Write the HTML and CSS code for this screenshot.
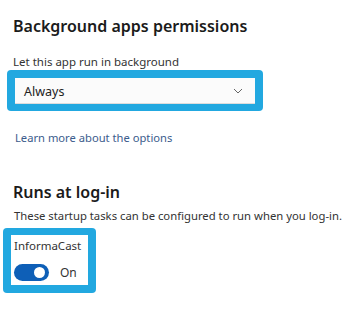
FILE: index.html
```html
<!DOCTYPE html>
<html>
<head>
    <title>App permissions</title>
    <link rel="stylesheet" href="styles.css">
</head>
<body>
    <div class="section">
        <h2>Background apps permissions</h2>
        <p class="label">Let this app run in background</p>
        <div class="highlight select-wrap">
            <div class="select">
                <span>Always</span>
                <svg class="chevron" width="10" height="6" viewBox="0 0 10 6">
                    <path d="M1 1 L5 5 L9 1" fill="none" stroke="#666" stroke-width="1"/>
                </svg>
            </div>
        </div>
        <a class="link" href="#">Learn more about the options</a>
    </div>

    <div class="section login">
        <h2>Runs at log-in</h2>
        <p class="desc">These startup tasks can be configured to run when you log-in.</p>
        <div class="highlight task-wrap">
            <div class="task">
                <div class="task-name">InformaCast</div>
                <div class="toggle-row">
                    <span class="toggle"><span class="knob"></span></span>
                    <span class="state">On</span>
                </div>
            </div>
        </div>
    </div>
</body>
</html>
```

FILE: styles.css
```css
body {
    font-family: "Noto Sans", "Open Sans", sans-serif;
    margin: 0;
    padding: 0;
    background-color: #fff;
    color: #1b1b1b;
}
.section {
    padding: 0 0 0 13px;
}
h2 {
    font-size: 16px;
    font-weight: 600;
    margin: 0;
    padding-top: 15px;
    line-height: 22px;
}
.label {
    font-size: 11.5px;
    color: #333;
    margin: 17px 0 0 0;
    line-height: 16px;
}
.highlight {
    background-color: #22a8e0;
    border-radius: 4px;
    padding: 8px;
}
.select-wrap {
    width: 240px;
    margin: 0 0 0 -6px;
    padding: 8px 8px 7px 8px;
}
.select {
    background-color: #fbfbfb;
    height: 26px;
    display: flex;
    align-items: center;
    justify-content: space-between;
    padding: 0 10px 0 9px;
    font-size: 12.5px;
    color: #222;
    box-shadow: inset 0 -1px 0 #ddd;
}
.chevron {
    margin-right: 2px;
}
.link {
    display: block;
    font-size: 11.2px;
    color: #3b5c8c;
    text-decoration: none;
    margin: 19px 0 0 2px;
}
.login h2 {
    padding-top: 36px;
}
.desc {
    font-size: 11.3px;
    color: #333;
    margin: 5px 0 0 1px;
    line-height: 16px;
}
.task-wrap {
    width: fit-content;
    margin: 4px 0 0 -10px;
    padding: 7px 8px 8px 8px;
}
.task {
    background-color: #fff;
    width: 74px;
    height: 47px;
    padding: 3px 0 0 3px;
}
.task-name {
    font-size: 11.5px;
    color: #333;
    line-height: 16px;
}
.toggle-row {
    display: flex;
    align-items: center;
    margin-top: 10px;
}
.toggle {
    display: inline-block;
    position: relative;
    width: 35px;
    height: 17px;
    border-radius: 9px;
    background-color: #0e5fb7;
}
.knob {
    position: absolute;
    top: 3px;
    right: 4px;
    width: 11px;
    height: 11px;
    border-radius: 50%;
    background-color: #fff;
}
.state {
    font-size: 12px;
    color: #333;
    margin-left: 11px;
}
```
